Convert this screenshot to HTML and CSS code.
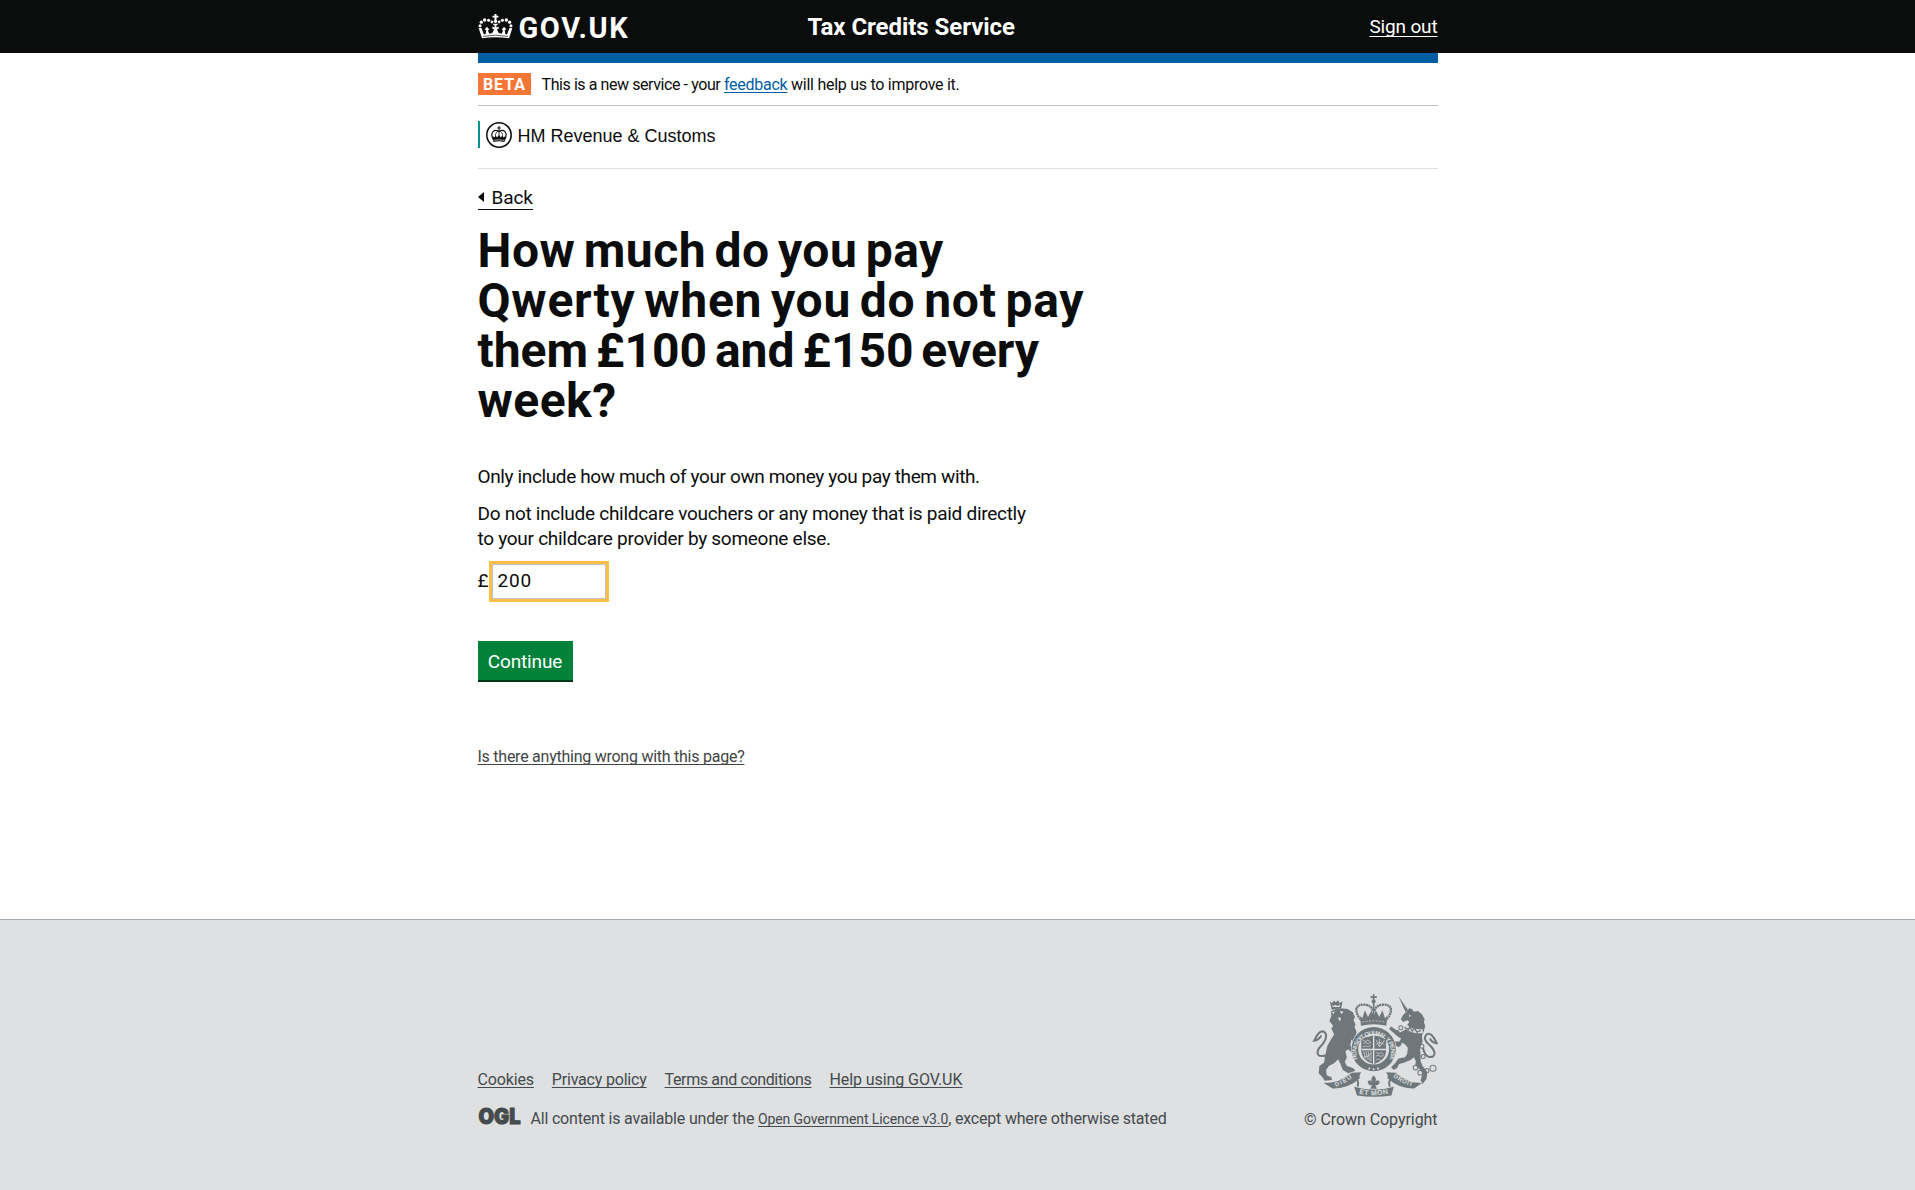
FILE: index.html
```html
<!DOCTYPE html>
<html lang="en">
<head>
<meta charset="utf-8">
<title>Tax Credits Service - GOV.UK</title>
<link rel="stylesheet" href="styles.css">
</head>
<body>
<header class="site-header">
  <div class="wrap site-header__inner">
    <a class="brand" href="#">
      <svg class="brand__crown" viewBox="24 24 104 76" aria-hidden="true">
        <g fill="#fff">
          <path d="M73 24h6v5h6v6h-6v8h-6v-8h-6v-6h6z"/>
          <circle cx="76" cy="46" r="5"/>
          <circle cx="65" cy="48" r="4"/><circle cx="87" cy="48" r="4"/>
          <circle cx="55" cy="43" r="4.6"/><circle cx="97" cy="43" r="4.6"/>
          <circle cx="43" cy="42" r="5.2"/><circle cx="109" cy="42" r="5.2"/>
          <circle cx="33" cy="49" r="5"/><circle cx="119" cy="49" r="5"/>
          <circle cx="29" cy="60" r="4.6"/><circle cx="123" cy="60" r="4.6"/>
          <path d="M25 67l8-1 8 20 5-1 2-12-5-2 7-8 7 8-4 3 4 10 9-2 6-11-6-2 1-7 6 3 1-6h4l1 6 6-3 1 7-6 2 6 11 9 2 4-10-4-3 7-8 7 8-5 2 2 12 5 1 8-20 8 1-10 31q-42-7-82 0z"/>
          <path d="M67 54h18l-6 6h-6z"/>
        </g>
        <path d="M38 92q38-7 76 0" fill="none" stroke="#0b0c0c" stroke-width="2"/>
      </svg>
      <span class="brand__name">GOV.UK</span>
    </a>
    <a class="service-name" href="#">Tax Credits Service</a>
    <a class="sign-out" href="#">Sign out</a>
  </div>
</header>

<div class="wrap">
  <div class="accent-bar"></div>
  <div class="phase-banner">
    <strong class="phase-banner__tag">BETA</strong>
    <span class="phase-banner__text"><span class="phase-banner__lead">This is a new service - your</span> <a href="#">feedback</a> will help us to improve it.</span>
  </div>
  <div class="department">
    <div class="department__mark">
      <svg class="department__crest" viewBox="0 0 26 26" aria-hidden="true">
        <circle cx="13" cy="13" r="12.2" fill="none" stroke="#0b0c0c" stroke-width="1.5"/>
        <path d="M12.5 4h1v1.5h1.3v1h-1.3V8h-1V6.500h-1.300v-1h1.300z" fill="#0b0c0c"/>
        <g fill="none" stroke="#0b0c0c" stroke-width="1.2">
          <path d="M7.200 17.500C3.500 10 8.500 6.500 13 9.500c4.500-3 9.500.5 5.800 8"/>
          <path d="M13 8v8M10.500 16c-2-3-1-6 2.500-7 3.500 1 4.500 4 2.500 7" stroke-width=".8"/>
        </g>
        <path d="M6.500 14l2 1.500 1-2 1.500 2 2-2.500 2 2.500 1.500-2 1 2 2-1.500-1 6q-5.500-1.500-11 0z" fill="#0b0c0c"/>
        <path d="M8 18.300q5-1 10 0" stroke="#fff" stroke-width=".6" fill="none"/>
      </svg>
      <span>HM Revenue &amp; Customs</span>
    </div>
  </div>

  <main class="content">
    <a class="back-link" href="#">Back</a>
    <h1 class="question">
      <span class="question__line question__line--a">How much do you pay</span>
      <span class="question__line question__line--b">Qwerty when you do not pay</span>
      <span class="question__line question__line--c">them £100 and £150 every</span>
      <span class="question__line question__line--d">week?</span>
    </h1>
    <p class="hint hint--intro">Only include how much of your own money you pay them with.</p>
    <p class="hint">Do not include childcare vouchers or any money that is paid directly<br>to your childcare provider by someone else.</p>
    <form class="amount-form">
      <label class="amount"><span class="amount__unit">£</span><input class="amount__input" type="text" value="200"></label>
      <button class="button" type="button">Continue</button>
    </form>
    <a class="report-link" href="#">Is there anything wrong with this page?</a>
  </main>
</div>

<footer class="site-footer">
  <div class="wrap site-footer__inner">
    <div class="site-footer__meta">
      <nav class="footer-links">
        <a class="footer-links__cookies" href="#">Cookies</a>
        <a class="footer-links__privacy" href="#">Privacy policy</a>
        <a class="footer-links__terms" href="#">Terms and conditions</a>
        <a class="footer-links__help" href="#">Help using GOV.UK</a>
      </nav>
      <div class="licence">
        <svg class="licence__logo" viewBox="0 0 43 17" role="img" aria-label="OGL">
          <text x="0.500" y="16" textLength="42" lengthAdjust="spacingAndGlyphs">OGL</text>
        </svg>
        <p class="licence__text">All content is available under the <a href="#">Open Government Licence v3.0</a>, except where otherwise stated</p>
      </div>
    </div>
    <a class="copyright" href="#">
      <svg class="copyright__arms" viewBox="68 44 376 306" aria-hidden="true">
        <defs>
          <path id="garter" d="M204 238A52 52 0 1 1 300 238"/>
          <path id="ribbon-left" d="M139 320Q168 309 190 292"/>
          <path id="ribbon-mid" d="M208 341Q252 351 298 340"/>
          <path id="ribbon-right" d="M310 290Q336 311 370 319"/>
        </defs>
        <g fill="#6f777b">
          <!-- imperial crown -->
          <path d="M249 44h6l-1 6 7-1v7l-7-1 1 7h-6l1-7-7 1v-7l7 1z"/>
          <circle cx="252" cy="66" r="6"/>
          <path d="M212 108l6 8 8-24 9 20 11-20 6 18 6-18 11 20 9-20 8 24 6-8-2 30q-38-9-76 0z"/>
          <!-- lion -->
          <path d="M121 66l7 5 5-8 6 5 7-6 4 8 9-4-4 20-28 4z"/>
          <path d="M124 96L134 90 152 86 174 88 190 98 196 112 192 122 198 134 195 142 201 156 198 176 206 190 202 204 194 196 186 178 182 196 196 212 190 222 176 208 168 214 172 232 166 246 172 258 190 264 198 272 176 280 160 270 152 250 146 238 134 250 118 258 110 270 112 286 126 292 128 300 106 302 98 290 88 280 90 258 104 248 108 224 114 198 124 180 134 164 126 146 131 138 120 124 126 108z"/>
          <!-- unicorn -->
          <path d="M326 50l29 42-8 5z"/>
          <path d="M358 86L354 92 340 106 333 118 340 127 352 122 358 126 350 140 346 150 330 158 318 150 304 140 298 148 312 160 326 172 334 176 328 186 312 184 310 192 326 202 334 196 336 188 346 194 354 204 352 222 346 232 326 236 316 250 304 262 312 270 322 264 328 252 344 248 362 240 372 232 378 244 376 256 392 270 398 282 392 300 398 312 410 296 412 276 398 258 392 244 392 222 390 204 398 186 396 168 402 154 406 138 402 128 404 118 396 104 384 94 372 96 366 88z"/>
          <!-- motto ribbons -->
          <path d="M103 309q48 0 84-31l28-1q-8 10-4 18-36 32-82 30z"/>
          <path d="M396 309q-44 0-79-31l-28-1q8 10 4 18 36 32 80 30z"/>
          <path d="M194 320q60 18 118 0l-7 26q-52 8-103 0z"/>
        </g>
        <g fill="none" stroke="#6f777b">
          <path d="M218 124C192 98 196 74 222 75q24 1 28 20M286 124c26-26 22-50-4-49q-24 1-28 20" stroke-width="7" stroke-dasharray="6 1.500"/>
          <path d="M252 68v45" stroke-width="5"/>
          <!-- tails -->
          <path d="M113 226q-38 10-25-20 34-35 16-50-14-7-30 27 14-2 22-16" stroke-width="6"/>
          <path d="M399 204q8 34 30 26 12-12-8-32-25-20-11-34 14-10 30 26-14 0-20-14" stroke-width="6"/>
          <!-- chain -->
          <g stroke-width="3"><circle cx="396" cy="199" r="6"/><circle cx="400" cy="230" r="6"/><circle cx="377" cy="263" r="7"/><circle cx="391" cy="278" r="7"/><circle cx="411" cy="272" r="6"/><circle cx="429" cy="265" r="9"/><circle cx="333" cy="144" r="6"/><circle cx="322" cy="158" r="6"/></g>
          <path d="M190 294q22 4 14 26M314 294q-22 4-14 26" stroke-width="6"/>
        </g>
        <path d="M346 140q24 18 52 14" fill="none" stroke="#dee0e2" stroke-width="12"/>
        <path d="M344 142l12 8 4-9 7 13 7-9 7 12 12-5" fill="none" stroke="#6f777b" stroke-width="4"/>
        <!-- garter and shield -->
        <circle cx="252" cy="208" r="68" fill="#dee0e2"/>
        <circle cx="252" cy="208" r="66" fill="#6f777b"/>
        <circle cx="252" cy="208" r="46" fill="#dee0e2"/>
        <path d="M215 178q37-22 74 0v38q-3 27-37 37-34-10-37-37z" fill="#6f777b"/>
        <path d="M252 166v86M216 209h73" stroke="#dee0e2" stroke-width="4"/>
        <g fill="none" stroke="#dee0e2" stroke-width="2">
          <path d="M220 181l8 4 6-4 8 5M221 191l7-3 8 4 8-4M220 201l9-3 6 3 8-4"/>
          <path d="M260 181l9 20 8-9 7-11M258 196q12-16 27 0M270 177v22"/>
          <path d="M222 214l6 22M229 214l5 24M236 214l3 28M244 214v31M222 231q12 2 24-12"/>
          <path d="M260 218l8 4 6-4 8 5M259 229l7-3 8 4 8-4M259 240l7-3 6 3"/>
        </g>
        <g fill="#dee0e2"><circle cx="239" cy="266" r="3"/><circle cx="252" cy="268" r="3"/><circle cx="265" cy="266" r="3"/><path d="M126 99l10-4-3 8zM151 93l11 3-6 8zM145 113l10 2-4 11zM127 74l4 5 7-3 7 3 7-5-2 8h-20zM357 105l7 3-6 4z"/></g>
        <!-- lower fleur-de-lis -->
        <path d="M252 286q12 12 3 22 10-13 15-2-2 11-13 9l5 11h-20l5-11q-11 2-13-9 5-11 15 2-9-10 3-22z" fill="#6f777b"/>
        <path d="M218 127q34-7 68 0" fill="none" stroke="#dee0e2" stroke-width="2" stroke-dasharray="6 4"/>
        <g class="arms-motto">
          <text font-size="18"><textPath href="#garter" textLength="205">HONI SOIT QUI MAL Y PENSE</textPath></text>
          <text font-size="18"><textPath href="#ribbon-left" textLength="55">DIEU</textPath></text>
          <text font-size="21"><textPath href="#ribbon-mid" textLength="88">ET MON</textPath></text>
          <text font-size="18"><textPath href="#ribbon-right" textLength="64">DROIT</textPath></text>
        </g>
      </svg>
      <span class="copyright__text">© Crown Copyright</span>
    </a>
  </div>
</footer>
</body>
</html>
```
FILE: styles.css
```css
* { box-sizing: border-box; }

body {
  margin: 0;
  min-height: 1190px;
  display: flex;
  flex-direction: column;
  background: #fff;
  color: #0b0c0c;
  font: 19px/25px Roboto, "Liberation Sans", sans-serif;
}

a {
  text-decoration-thickness: 1px;
  text-decoration-skip-ink: none;
  text-underline-offset: 2px;
}

.wrap { width: 960px; margin: 0 auto; }

/* Header */
.site-header { height: 53px; background: #0b0c0c; }
.site-header__inner { display: flex; align-items: center; height: 53px; }
.site-header a { color: #fff; }
.brand { display: flex; align-items: center; gap: 6px; width: 330px; text-decoration: none; }
.brand__crown { width: 35px; height: 25px; margin-top: -1px; }
.brand__name { font-size: 29px; font-weight: 700; line-height: 34px; letter-spacing: 1.6px; padding-top: 2px; }
.service-name { padding-top: 2px; font-size: 24px; font-weight: 700; letter-spacing: -0.05px; text-decoration: none; }
.sign-out { margin-left: auto; letter-spacing: -0.15px; text-underline-offset: 3px; }

.accent-bar { height: 10px; background: #005ea5; }

/* Phase banner */
.phase-banner {
  display: flex;
  align-items: center;
  gap: 11px;
  height: 43px;
  border-bottom: 1px solid #bfc1c3;
  font-size: 16px;
  line-height: 20px;
  letter-spacing: -0.27px;
}
.phase-banner__tag {
  width: 53px;
  height: 22px;
  background: #f47738;
  color: #fff;
  text-align: center;
  line-height: 23px;
  letter-spacing: 1px;
  padding-left: 1px;
}
.phase-banner__text { padding-top: 2px; }
.phase-banner__lead { letter-spacing: -0.42px; }
.phase-banner a { color: #005ea5; }

/* Department */
.department { height: 63px; padding-top: 15px; border-bottom: 1px solid #dee0e2; }
.department__mark {
  display: flex;
  align-items: center;
  height: 27px;
  padding-left: 6px;
  border-left: 2px solid #009390;
  font: 18px/27px "Liberation Sans", Arial, sans-serif;
}
.department__mark span { padding-top: 3px; }
.department__crest { width: 26px; height: 26px; margin-right: 6px; }

/* Question page */
.content { display: flex; flex-direction: column; align-items: flex-start; padding-top: 16px; }
.back-link {
  display: flex;
  align-items: center;
  height: 25px;
  border-bottom: 1px solid #0b0c0c;
  color: #0b0c0c;
  letter-spacing: -0.1px;
  text-decoration: none;
}
.back-link::before {
  content: "";
  margin-right: 8px;
  border: 5px solid transparent;
  border-right: 6px solid #0b0c0c;
  border-left: 0;
}
.question { margin: 16px 0 38px; font-size: 48px; line-height: 50px; font-weight: 700; word-spacing: -4px; }
.question__line { display: block; }
.question__line--a { letter-spacing: 0.5px; }
.question__line--b { letter-spacing: 0.77px; }
.question__line--c { letter-spacing: -0.02px; }
.question__line--d { letter-spacing: 0.5px; }
.hint { margin: 0; letter-spacing: -0.28px; }
.hint--intro { margin-bottom: 12px; letter-spacing: -0.37px; }
.amount-form { margin-top: 10px; }
.amount { display: flex; align-items: center; height: 41px; }
.amount__unit { width: 14px; margin-top: -2px; }
.amount__input {
  width: 114px;
  height: 35px;
  padding: 0 5px 2px;
  border: 1px solid #bfc1c3;
  border-radius: 0;
  outline: 3px solid #ffbf47;
  background: #fff;
  color: #0b0c0c;
  font: inherit;
  letter-spacing: 0.8px;
}
.button {
  display: block;
  width: 95px;
  height: 41px;
  margin-top: 39px;
  padding: 2px 0 0;
  border: 0;
  border-bottom: 2px solid #003618;
  background: #00823b;
  color: #fff;
  font: inherit;
  letter-spacing: -0.15px;
}
.report-link {
  margin-top: 65px;
  color: #434445;
  font-size: 16px;
  line-height: 20px;
  letter-spacing: -0.25px;
}

/* Footer */
.site-footer {
  height: 271px;
  margin-top: auto;
  padding-top: 74px;
  border-top: 1px solid #a1acb2;
  background: #dee0e2;
  color: #454a4c;
  font-size: 16px;
  line-height: 20px;
}
.site-footer a { color: #454a4c; }
.site-footer__inner { display: flex; justify-content: space-between; }
.site-footer__meta { padding-top: 76px; }
.footer-links { display: flex; gap: 18px; }
.footer-links__cookies { letter-spacing: -0.15px; }
.footer-links__privacy { letter-spacing: -0.2px; }
.footer-links__terms { letter-spacing: -0.36px; }
.footer-links__help { letter-spacing: -0.08px; }
.licence { display: flex; align-items: center; gap: 10px; margin-top: 19px; }
.licence__logo { width: 43px; height: 17px; margin-top: -5px; overflow: visible; }
.licence__logo text {
  font: 900 21px Inter, sans-serif;
  fill: #454a4c;
  stroke: #454a4c;
  stroke-width: 1;
}
.licence__text { margin: 0; letter-spacing: -0.19px; }
.licence__text a { font-size: 14px; letter-spacing: -0.12px; }
.copyright { display: flex; flex-direction: column; align-items: flex-end; text-decoration: none; }
.copyright__arms { width: 126px; height: 103px; }
.copyright__text { margin-top: 13px; letter-spacing: -0.06px; }
.arms-motto { font-family: "Liberation Sans", Arial, sans-serif; font-weight: 700; fill: #dee0e2; }
```
